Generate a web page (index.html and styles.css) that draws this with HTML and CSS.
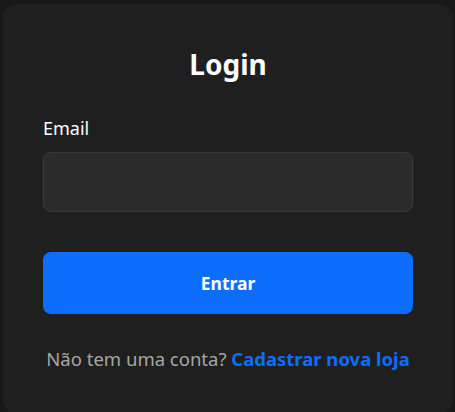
FILE: index.html
```html
<!DOCTYPE html>
<html lang="pt-BR">
<head>
<meta charset="utf-8">
<title>Login</title>
<link rel="stylesheet" href="styles.css">
</head>
<body>
<main class="card">
  <h1 class="title">Login</h1>
  <form class="form">
    <label class="label" for="email">Email</label>
    <input class="input" id="email" type="email">
    <button class="btn" type="button">Entrar</button>
  </form>
  <p class="footer">Não tem uma conta? <a class="link" href="#">Cadastrar nova loja</a></p>
</main>
</body>
</html>
```
FILE: styles.css
```css
* { box-sizing: border-box; }
html, body { margin: 0; height: 100%; }
body {
  background: #181818;
  font-family: "Noto Sans", "Open Sans", sans-serif;
  color: #fff;
  padding: 4px 2px 0 3px;
  overflow: hidden;
}
.card {
  background: #1f1f1f;
  border-radius: 14px;
  padding: 38px 40px 40px 40px;
  height: 410px;
}
.title {
  margin: 0 0 30px;
  text-align: center;
  font-size: 28px;
  font-weight: 700;
  line-height: 44px;
}
.form { display: flex; flex-direction: column; }
.label {
  font-size: 18px;
  line-height: 24px;
  margin-bottom: 12px;
}
.input {
  height: 60px;
  background: #2b2b2b;
  border: 1px solid #3a3a3a;
  border-radius: 8px;
  margin-bottom: 40px;
  outline: none;
}
.btn {
  height: 62px;
  background: #0d6efd;
  border: none;
  border-radius: 8px;
  color: #fff;
  font-family: inherit;
  font-size: 17.5px;
  font-weight: 700;
}
.footer {
  margin: 32px 0 0;
  text-align: center;
  font-size: 18.5px;
  line-height: 26px;
  color: #a6a6a6;
}
.link {
  color: #0d6efd;
  font-weight: 700;
  text-decoration: none;
}
```
